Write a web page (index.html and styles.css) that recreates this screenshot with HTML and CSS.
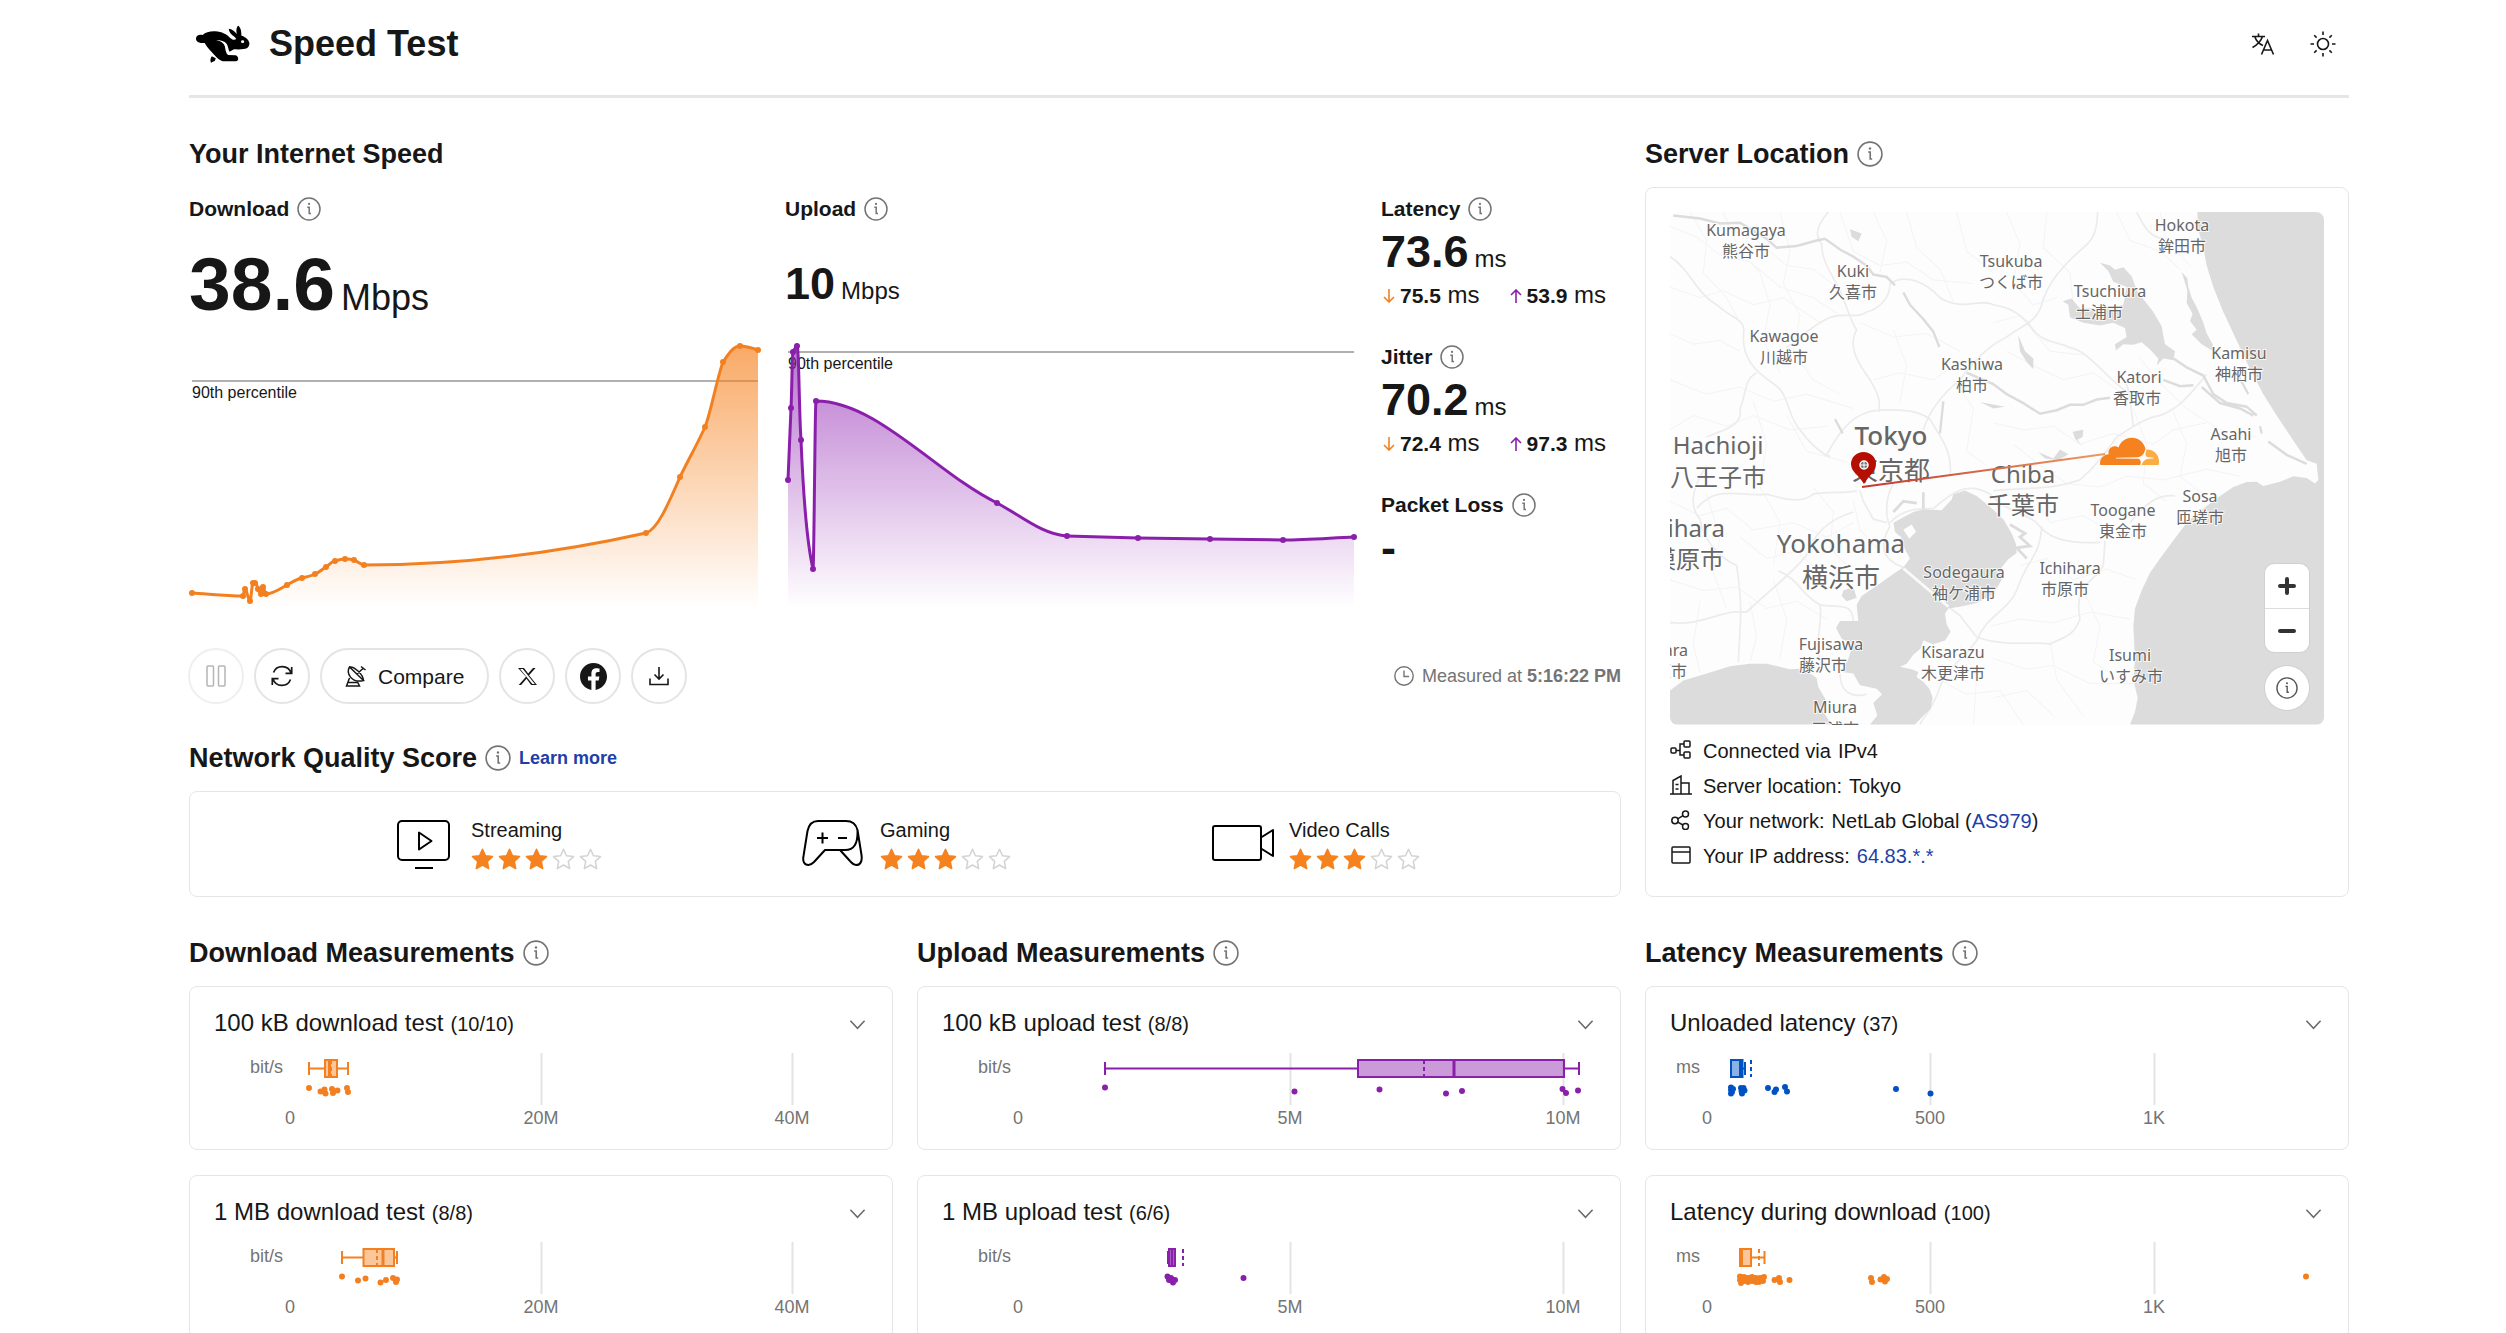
FILE: index.html
```html
<!DOCTYPE html>
<html lang="en">
<head>
<meta charset="utf-8">
<meta name="viewport" content="width=device-width, initial-scale=1">
<title>Speed Test</title>
<link rel="stylesheet" href="styles.css">
</head>
<body>
<svg class="defs" aria-hidden="true">
  <symbol id="i-info" viewBox="0 0 24 24"><g fill="none" stroke="currentColor" stroke-width="1.5"><circle cx="12" cy="12" r="11"/><path d="M10.3 10.2H12.2V16.6H14"/></g><circle cx="12" cy="6.9" r="1.1" fill="currentColor"/></symbol>
  <symbol id="i-star" viewBox="0 0 23 22"><path d="M11.5 1.2l3 6.6 7 .8-5.2 4.8 1.4 7.2-6.2-3.6-6.2 3.6 1.4-7.2L1.500 8.600l7-.8z" stroke-width="1.500" stroke-linejoin="round"/></symbol>
  <symbol id="i-chevron" viewBox="0 0 18 12"><path d="M1.500 1.500L9 9.500 16.500 1.500" fill="none" stroke="currentColor" stroke-width="1.600"/></symbol>
  <symbol id="i-down" viewBox="0 0 12 14"><path d="M6 0V13M1 8L6 13 11 8" fill="none" stroke="currentColor" stroke-width="1.600"/></symbol>
  <symbol id="i-up" viewBox="0 0 12 14"><path d="M6 14V1M1 6L6 1 11 6" fill="none" stroke="currentColor" stroke-width="1.600"/></symbol>
</svg>

<header class="site-header">
  <div class="brand">
    <svg class="logo" viewBox="0 0 60 42" aria-hidden="true"><g transform="scale(.3954 .3333) translate(-56 -68)">
      <path d="M66 115C66 106 74 101 83 104C90 96 102 92 115 93C132 94 144 103 152 112C157 118 163 120 168 116L164 110C154 103 149 92 149 85C157 86 164 93 170 102C167 92 168 80 173 76C180 82 181 95 181 106C190 108 199 117 201 127C202 138 196 145 187 146C177 148 168 147 162 147L151 154C147 146 148 139 144 131C138 122 129 119 117 119C128 122 137 128 139 138C141 148 141 158 147 164L165 165C174 166 176 183 167 183H134C128 181 120 174 112 163C104 153 94 141 88 128C78 129 66 126 66 115Z"/><path d="M106 168C103 174 101 180 104 187L114 181L116 174Z"/><circle cx="184" cy="124" r="4" fill="#fff"/></g></svg>
    <h1>Speed Test</h1>
  </div>
  <nav class="header-tools" aria-label="Preferences">
    <button class="icon-btn" aria-label="Language"><svg width="24" height="24" viewBox="0 0 24 24" fill="none" stroke="currentColor" stroke-width="1.600"><path d="M1 4.500H14M7.500 1.500V4.500M11.500 4.500C10 9 6 13 1.500 15.500M3.800 4.500C5 8.500 8.500 12 12 13.500M10.500 22.500L16.500 8.500L22.500 22.500M12.500 18H20.500"/></svg></button>
    <button class="icon-btn" aria-label="Theme"><svg width="26" height="26" viewBox="0 0 26 26" fill="none" stroke="currentColor" stroke-width="1.600"><circle cx="13" cy="13" r="5.500"/><path d="M13 .5V4M13 22V25.500M.5 13H4M22 13H25.500M4.200 4.200L6.600 6.600M19.400 19.400L21.800 21.800M4.200 21.800L6.600 19.400M19.400 6.600L21.800 4.200"/></svg></button>
  </nav>
</header>

<main class="layout">
  <div class="overview">
    <section class="speed">
      <h2>Your Internet Speed</h2>
      <div class="speed-grid">
        <div>
          <h3>Download <button class="info" aria-label="About download"><svg><use href="#i-info"/></svg></button></h3>
          <div class="value"><p class="value-xl"><strong>38.6</strong> <span>Mbps</span></p></div>
          <svg class="chart" viewBox="0 0 572 276" role="img" aria-label="Download speed over time">
            <defs><linearGradient id="g-down" x1="0" y1="14" x2="0" y2="276" gradientUnits="userSpaceOnUse"><stop offset="0" stop-color="#f6821f" stop-opacity=".68"/><stop offset="1" stop-color="#f6821f" stop-opacity="0"/></linearGradient></defs>
            <path class="pct" d="M3 49H569"/><text x="3" y="66">90th percentile</text>
            <path fill="url(#g-down)" d="M3 261C20 262 37 264 54 264C55 262 55 257 56 257C58 257 59 269 61 269C62 269 63 251 64 251H66C68 251 68 255 69 257C70 259 71 262 72 262C73 262 73 255 74 255C75 255 76 262 77 262C84 262 91 257 98 253C103 250 108 247 113 246C117 245 122 244 126 242C130 241 133 237 137 235C140 233 143 229 146 229C149 228 153 227 156 227S162 227 165 228S172 233 175 233C269 233 363 222 457 201C468 198 479 173 491 145C499 128 507 115 516 95C522 80 528 46 534 30C540 21 545 14 551 14C557 14 563 16 569 18V276H3Z"/>
            <path class="line orange" d="M3 261C20 262 37 264 54 264C55 262 55 257 56 257C58 257 59 269 61 269C62 269 63 251 64 251H66C68 251 68 255 69 257C70 259 71 262 72 262C73 262 73 255 74 255C75 255 76 262 77 262C84 262 91 257 98 253C103 250 108 247 113 246C117 245 122 244 126 242C130 241 133 237 137 235C140 233 143 229 146 229C149 228 153 227 156 227S162 227 165 228S172 233 175 233C269 233 363 222 457 201C468 198 479 173 491 145C499 128 507 115 516 95C522 80 528 46 534 30C540 21 545 14 551 14C557 14 563 16 569 18"/>
            <path class="dots orange" d="M3 261h0M54 264h0M56 257h0M61 269h0M64 251h0M66 251h0M69 257h0M72 262h0M74 255h0M77 262h0M98 253h0M113 246h0M126 242h0M137 235h0M146 229h0M156 227h0M165 228h0M175 233h0M457 201h0M491 145h0M516 95h0M534 30h0M551 14h0M569 18h0"/>
          </svg>
        </div>
        <div>
          <h3>Upload <button class="info" aria-label="About upload"><svg><use href="#i-info"/></svg></button></h3>
          <div class="value"><p class="value-lg"><strong>10</strong> <span>Mbps</span></p></div>
          <svg class="chart" viewBox="0 0 572 276" role="img" aria-label="Upload speed over time">
            <defs><linearGradient id="g-up" x1="0" y1="14" x2="0" y2="276" gradientUnits="userSpaceOnUse"><stop offset="0" stop-color="#8e1fb0" stop-opacity=".62"/><stop offset="1" stop-color="#8e1fb0" stop-opacity="0"/></linearGradient></defs>
            <path class="pct" d="M3 20H569"/><text x="3" y="37">90th percentile</text>
            <path fill="url(#g-up)" d="M3 148C4 124 5 100 6 76C7 56 7 22 8 20C9 18 11 14 12 14C14 14 14 80 16 108C19 180 24 220 28 237C29 237 30 69 31 69C91 69 151 141 212 171C235 183 258 203 282 204L353 206L425 207L498 208C522 208 545 206 569 205V276H3Z"/>
            <path class="line purple" d="M3 148C4 124 5 100 6 76C7 56 7 22 8 20C9 18 11 14 12 14C14 14 14 80 16 108C19 180 24 220 28 237C29 237 30 69 31 69C91 69 151 141 212 171C235 183 258 203 282 204L353 206L425 207L498 208C522 208 545 206 569 205"/>
            <path class="dots purple" d="M3 148h0M6 76h0M8 20h0M12 14h0M16 108h0M28 237h0M31 69h0M212 171h0M282 204h0M353 206h0M425 207h0M498 208h0M569 205h0"/>
          </svg>
        </div>
        <div class="metrics">
          <div>
            <h3>Latency <button class="info" aria-label="About latency"><svg><use href="#i-info"/></svg></button></h3>
            <p class="value-lg metric"><strong>73.6</strong> <span>ms</span></p>
            <p class="split"><span><svg class="orange"><use href="#i-down"/></svg><strong>75.5</strong> ms</span><span><svg class="purple"><use href="#i-up"/></svg><strong>53.9</strong> ms</span></p>
          </div>
          <div>
            <h3>Jitter <button class="info" aria-label="About jitter"><svg><use href="#i-info"/></svg></button></h3>
            <p class="value-lg metric"><strong>70.2</strong> <span>ms</span></p>
            <p class="split"><span><svg class="orange"><use href="#i-down"/></svg><strong>72.4</strong> ms</span><span><svg class="purple"><use href="#i-up"/></svg><strong>97.3</strong> ms</span></p>
          </div>
          <div>
            <h3>Packet Loss <button class="info" aria-label="About packet loss"><svg><use href="#i-info"/></svg></button></h3>
            <p class="value-lg metric"><strong>-</strong></p>
          </div>
        </div>
      </div>
      <div class="actions">
        <button class="pill" disabled aria-label="Pause"><svg width="20" height="22" viewBox="0 0 20 22" fill="none" stroke="currentColor" stroke-width="1.500"><rect x="1" y="1" width="6.500" height="20" rx="1"/><rect x="12.500" y="1" width="6.500" height="20" rx="1"/></svg></button>
        <button class="pill" aria-label="Retest"><svg width="22" height="22" viewBox="0 0 22 22" fill="none" stroke="currentColor" stroke-width="1.700"><path d="M2.500 7.500A9.300 9.300 0 0 1 20 8M20.700 2V8.300H14.500M19.500 14.500A9.300 9.300 0 0 1 2 14M1.300 20V13.700H7.500"/></svg></button>
        <button class="pill pill-wide"><svg width="22" height="22" viewBox="0 0 22 22" fill="none" stroke="currentColor" stroke-width="1.500"><path d="M4.500 2C1 8 6 18.500 18.500 15.500ZM4.500 2C9 1 18 9 18.500 15.500M12 9L18.500 3M16 1.500L20.500 5M4.500 13L1.500 21H14.500L12 16M3.500 17.500H12.500"/></svg>Compare</button>
        <button class="pill" aria-label="Share on X"><svg width="19" height="19" viewBox="0 0 24 24"><path d="M18.901 1.153h3.300l-8.200 9.400L24 22.846h-7.406l-5.800-7.884-6.838 7.884H.874l9.200-10.530L0 1.154h7.594l5.243 7.132ZM18.110 21.444h3.200L6.086 2.540H2.700Z"/></svg></button>
        <button class="pill" aria-label="Share on Facebook"><svg width="27" height="27" viewBox="0 0 24 24"><path d="M24 12.073c0-6.627-5.373-12-12-12s-12 5.373-12 12c0 5.990 4.388 10.954 10.125 11.854v-8.385H7.078v-3.470h3.047V9.430c0-3.007 1.792-4.669 4.533-4.669 1.312 0 2.686.235 2.686.235v2.953H15.830c-1.491 0-1.956.925-1.956 1.874v2.250h3.328l-.532 3.470h-2.796v8.385C19.612 23.027 24 18.062 24 12.073z"/></svg></button>
        <button class="pill" aria-label="Download results"><svg width="20" height="20" viewBox="0 0 20 20" fill="none" stroke="currentColor" stroke-width="1.600"><path d="M10 1V12.500M5.500 8.500L10 13 14.500 8.500M1 12.500V18.500H19V12.500"/></svg></button>
        <p class="measured"><svg width="20" height="20" viewBox="0 0 20 20" fill="none" stroke="currentColor" stroke-width="1.400"><circle cx="10" cy="10" r="9.200"/><path d="M10 4.500V10.500H15"/></svg><span>Measured at <strong>5:16:22 PM</strong></span></p>
      </div>
    </section>

    <section class="quality">
      <h2>Network Quality Score <button class="info" aria-label="About the score"><svg><use href="#i-info"/></svg></button><a class="learn" href="#">Learn more</a></h2>
      <div class="card scores">
        <div class="score">
          <svg class="score-icon" viewBox="0 0 64 56" aria-hidden="true"><rect x="5" y="5" width="51" height="39" rx="4"/><path d="M26 16.500V33.500L38.500 25Z"/><path d="M22 52H40"/></svg>
          <div><p>Streaming</p><div class="stars" role="img" aria-label="3 of 5"><svg class="on"><use href="#i-star"/></svg><svg class="on"><use href="#i-star"/></svg><svg class="on"><use href="#i-star"/></svg><svg><use href="#i-star"/></svg><svg><use href="#i-star"/></svg></div></div>
        </div>
        <div class="score">
          <svg class="score-icon" viewBox="0 0 64 56" aria-hidden="true"><path d="M16 5H44C51 5 54 8 55.500 14L59.500 39C60.500 46 58 49 54 49C51 49 50 47 48 45L38 34H23L12 46C10 48 9 49 6.500 49C2 49 .5 45 1.500 40L5.500 15C7 8 10 5 16 5ZM38 34H43C52 34 56 28 55.500 14M20.500 16.500V27.500M15 22H26M36 22H45"/></svg>
          <div><p>Gaming</p><div class="stars" role="img" aria-label="3 of 5"><svg class="on"><use href="#i-star"/></svg><svg class="on"><use href="#i-star"/></svg><svg class="on"><use href="#i-star"/></svg><svg><use href="#i-star"/></svg><svg><use href="#i-star"/></svg></div></div>
        </div>
        <div class="score">
          <svg class="score-icon" viewBox="0 0 64 56" aria-hidden="true"><rect x="2" y="10" width="48" height="34" rx="2"/><path d="M50 21.500L62 14V40L50 32.500"/></svg>
          <div><p>Video Calls</p><div class="stars" role="img" aria-label="3 of 5"><svg class="on"><use href="#i-star"/></svg><svg class="on"><use href="#i-star"/></svg><svg class="on"><use href="#i-star"/></svg><svg><use href="#i-star"/></svg><svg><use href="#i-star"/></svg></div></div>
        </div>
      </div>
    </section>
  </div>

  <section class="server">
    <h2>Server Location <button class="info" aria-label="About server location"><svg><use href="#i-info"/></svg></button></h2>
    <div class="card server-card">
      <div class="map">
        <svg class="map-canvas" viewBox="0 0 654 513" role="img" aria-label="Map of the Tokyo area">
          <rect width="654" height="513" fill="#fdfdfd"/>
          <g transform="translate(-30 -32.140) scale(.33333 .35714)">
            <g class="minor">
              <path d="M90 130L170 160 240 210 330 230 420 300 520 330 600 380M150 90L200 170 190 260 260 330 300 400M90 300L180 330 250 310 340 350 430 330 540 400M250 90L300 200 360 260 390 350 370 450 420 540M420 90L450 200 430 290 480 380 460 480 520 560 600 600M90 430L160 460 240 450 300 480M350 170L440 240 520 250 590 300M600 90L640 200 720 240 800 230 880 280 1000 290M700 90L740 170 720 260M800 90L830 190 900 250 940 340M950 90L980 200 1060 260M660 400L760 440 860 430 960 480M700 560L780 540 880 560 940 520M90 560L200 600 300 580 400 620 500 600 640 640M90 700L160 660 260 690 340 660 450 700 560 690M340 620L380 740 360 860 420 960 400 1080M440 660L500 760 620 790M90 900L180 940 260 920 340 980 460 960 560 1000 640 960M200 880L240 1000 220 1100 260 1200M300 1000L380 1060 470 1040 540 1100M90 1120L190 1150 290 1140 380 1200 470 1180 560 1230M330 1180L350 1280 330 1350M400 1120L440 1230 420 1340M180 1180L160 1300 180 1380M520 860L580 930 570 1030 620 1080M640 900L660 980 720 1040M760 420L800 520 780 620M940 560L1000 640 980 760 1040 800"/>
              <path d="M1100 90L1140 180 1120 290 1180 350 1250 330M1220 90L1210 190 1290 260 1300 350M1060 400L1140 380 1230 480 1330 490M1430 90L1470 170 1560 200 1620 250M1560 90L1580 170 1650 240M1100 480L1180 520 1270 560 1360 540 1450 600M1060 680L1150 700 1240 690 1320 740 1420 710 1540 740 1600 700 1700 680M1480 640L1520 740 1510 850 1580 900M1600 650L1640 740 1620 830 1690 880M1120 740L1200 800 1280 850 1380 860 1460 830 1570 840 1700 810 1800 830M1180 880L1230 960 1330 940 1420 990 1530 1000M1140 1080L1220 1060 1300 1120 1400 1090 1490 1120M1050 1250L1140 1230 1240 1240 1350 1210 1470 1230M1320 1130L1380 1250 1360 1350 1440 1400M1060 1340L1160 1370 1240 1360 1350 1410 1480 1410M1060 1450L1160 1430 1240 1500M1230 1290L1250 1400 1330 1500M900 1400L980 1440 1080 1430 1150 1525M960 1300L1010 1390 1000 1525M1500 500L1560 570 1640 640 1740 700 1850 720"/>
            </g>
            <path class="road" d="M565 90C520 140 530 160 545 180C545 230 580 270 600 310C630 380 640 410 650 420C620 470 660 520 690 560C715 600 720 610 718 650M90 215C150 250 170 320 230 350C280 390 310 390 312 420C300 500 350 540 400 570C450 600 440 660 480 700C510 740 550 770 570 775M350 540C310 560 320 600 300 640C310 690 250 700 200 720M440 470C480 440 530 400 570 385C620 370 650 390 680 370C720 360 750 330 750 290C800 260 860 290 900 330C970 370 1020 330 1060 350C1130 360 1150 390 1165 400C1200 460 1250 450 1290 470C1350 480 1400 560 1470 600M560 770C600 700 640 650 718 645C800 640 840 650 870 670C900 720 940 760 930 830M850 700C870 640 920 590 960 560C1030 470 1080 450 1100 440C1140 410 1190 400 1205 350C1220 290 1280 230 1330 190C1370 160 1370 130 1373 90M170 920C230 850 300 890 380 880C420 890 480 910 520 880C560 870 620 880 650 870M200 800C150 870 150 920 180 950C190 1010 240 1060 290 1080C300 1140 305 1200 300 1260L295 1350M90 1240C190 1250 250 1200 320 1210C400 1140 470 1090 500 1050C520 990 570 950 640 930M415 1095C480 1120 480 1160 540 1190C550 1250 520 1300 540 1340M660 870L670 900 700 950 740 960M760 850C730 900 740 950 750 970C720 1020 720 1060 790 1085M750 960C790 920 840 920 880 920C930 880 980 840 1050 880C1100 930 1150 930 1190 960C1220 1000 1270 1020 1380 1015M1205 970C1200 1060 1160 1060 1130 1150C1100 1210 1040 1220 1010 1290C960 1350 920 1370 900 1420C870 1500 850 1500 840 1525M790 1090C860 1140 900 1180 960 1220L1010 1280C1100 1310 1180 1290 1230 1300C1270 1280 1300 1280 1320 1230C1300 1130 1360 1130 1390 1080L1395 1010M1060 870C1170 860 1230 870 1320 840C1370 800 1400 760 1430 720C1480 690 1530 660 1560 660C1620 640 1650 600 1700 545M1480 690C1470 620 1470 580 1450 560M1470 960C1520 900 1560 880 1605 885M1490 90C1520 150 1540 160 1570 165M540 1190C600 1200 640 1180 640 1240M600 1380C600 1440 640 1450 680 1440"/>
            <path class="water" d="M760 960L790 945 820 930 850 922 905 925 935 895 940 880 975 870 1010 885 1050 915 1090 950 1115 990 1128 1020 1130 1045 1105 1062 1085 1085 1085 1120 1060 1160 1010 1185 960 1195 925 1200 915 1215 920 1245 932 1265 915 1290 880 1300 850 1290 842 1312 820 1330 800 1355 780 1363 815 1370 835 1378 830 1392 850 1405 868 1425 878 1450 872 1480 840 1510 825 1525 690 1525 712 1500 700 1465 726 1440 710 1425 660 1415 640 1382 605 1378 625 1340 640 1300 605 1285 588 1255 600 1235 655 1235 650 1190 665 1165 720 1130 750 1110 790 1085 810 1060 795 1035 785 1005 765 985ZM610 1150L640 1140 650 1170 620 1180 605 1165ZM90 1430L130 1402 200 1382 270 1362 330 1355 380 1355 450 1370 490 1368 530 1395 535 1420 560 1460 550 1490 575 1525 90 1525ZM1672 90L1675 140 1690 190 1700 240 1720 300 1750 370 1790 450 1830 530 1870 600 1910 660 1960 730 2000 785 2030 795 2035 840 2025 850 2000 835 1960 830 1920 845 1870 857 1850 845 1820 846 1780 860 1740 885 1690 920 1640 960 1600 1010 1560 1060 1530 1100 1505 1150 1485 1200 1480 1250 1485 1340 1480 1400 1493 1450 1485 1490 1470 1525H2052V90Z"/>
            <g transform="translate(1050)"><path class="water" d="M330 232L360 240 375 252 400 245 425 270 440 310 465 340 490 370 515 410 525 460 555 480 550 505 520 500 500 520 505 500 480 475 455 455 430 462 400 460 378 478 375 460 410 440 405 415 370 400 330 408 280 400 240 385 235 350 218 340 245 332 270 360 350 360 400 350 410 300 370 285 355 255ZM575 258L592 275 595 300 605 330 622 360 640 400 650 430 668 460 670 480 635 460 605 432 620 420 600 395 608 375 590 345 592 310ZM85 435L105 480 130 500 130 530 110 510 90 480ZM248 705L280 700 278 720 262 728 275 745 255 725ZM145 762L190 780 210 755 235 768 205 785 165 780Z"/></g>
            <path class="water" d="M630 138L665 150 655 172 635 160ZM1020 622L1095 635 1060 640Z"/>
            <path class="river" d="M100 100L180 108 240 122 300 120 380 165 410 190 470 185 530 170 555 165 600 195 640 215 680 240 700 265 740 272 765 295M790 315L810 350 850 390 880 425 898 468M980 540L1060 572 1100 600 1150 625 1200 655 1250 645 1290 630 1330 630 1370 615 1410 610M1570 560L1620 578 1660 575M1600 500L1640 525 1690 548 1720 600 1760 625 1820 635 1850 660M1685 580L1740 625 1800 640 1840 660M1790 540L1825 600M1885 733L1940 770 2000 795M1860 690L1865 710M910 620L900 710M585 670L608 710"/>
            <path class="dock" d="M1110 965L1155 990 1140 1000 1170 1025 1130 1030 1160 1060M760 930L790 900 830 905M850 875L850 920"/>
            <path fill="#fdfdfd" d="M790 980L815 965 828 985 808 1005ZM765 990L785 1000 770 1008Z"/>
            <path d="M790 1088L925 1195" stroke="#fafafa" stroke-width="8"/>
          </g>
          <g class="place">
            <text x="76" y="24">Kumagaya</text><text x="76" y="45">熊谷市</text>
            <text x="183" y="65">Kuki</text><text x="183" y="86">久喜市</text>
            <text x="114" y="130">Kawagoe</text><text x="114" y="151">川越市</text>
            <text x="341" y="55">Tsukuba</text><text x="341" y="76">つくば市</text>
            <text x="440" y="85">Tsuchiura</text><text x="429" y="106">土浦市</text>
            <text x="512" y="19">Hokota</text><text x="512" y="40">鉾田市</text>
            <text x="569" y="147">Kamisu</text><text x="569" y="168">神栖市</text>
            <text x="469" y="171">Katori</text><text x="467" y="192">香取市</text>
            <text x="302" y="158">Kashiwa</text><text x="302" y="179">柏市</text>
            <text x="561" y="228">Asahi</text><text x="561" y="249">旭市</text>
            <text x="530" y="290">Sosa</text><text x="530" y="311">匝瑳市</text>
            <text x="453" y="304">Toogane</text><text x="453" y="325">東金市</text>
            <text x="400" y="362">Ichihara</text><text x="395" y="383">市原市</text>
            <text x="460" y="449">Isumi</text><text x="461" y="470">いすみ市</text>
            <text x="294" y="366">Sodegaura</text><text x="294" y="387">袖ケ浦市</text>
            <text x="283" y="446">Kisarazu</text><text x="283" y="467">木更津市</text>
            <text x="161" y="438">Fujisawa</text><text x="153" y="459">藤沢市</text>
            <text x="165" y="501">Miura</text><text x="165" y="523">三浦市</text>
            <text class="end" x="18" y="444">Odawara</text><text class="end" x="17" y="465">小田原市</text>
          </g>
          <g class="place city">
            <text x="48" y="242">Hachioji</text><text x="48" y="274">八王子市</text>
            <text class="end" x="55" y="325">Sagamihara</text><text class="end" x="54" y="356">相模原市</text>
            <text x="353" y="271">Chiba</text><text x="353" y="302">千葉市</text>
          </g>
          <g class="place metro">
            <text class="capital" x="221" y="233">Tokyo</text><text x="221" y="268">東京都</text>
            <text x="171" y="341">Yokohama</text><text x="171" y="375">横浜市</text>
          </g>
          <defs><linearGradient id="g-route" x1="0" x2="1"><stop offset="0" stop-color="#c0392b"/><stop offset="1" stop-color="#ee9a62"/></linearGradient></defs>
          <path d="M192 275L435 242" stroke="url(#g-route)" stroke-width="2"/>
          <path d="M194 272C189 263 181 260 181 252A12.500 12 0 0 1 206 252C206 260 199 263 194 272Z" fill="#b50f04"/>
          <circle cx="194" cy="253" r="4" fill="#777" stroke="#fff" stroke-width="1.500"/><path d="M194 249V257M190 253H198" stroke="#fff"/>
          <g transform="translate(430 209.500) scale(2.460 2.490)"><path fill="#f6821f" d="M16.509 16.845c.147-.507.090-.971-.156-1.315-.224-.317-.604-.499-1.061-.521l-8.659-.112a.156.156 0 0 1-.133-.071c-.028-.042-.035-.099-.021-.156.028-.084.112-.148.203-.156l8.736-.112c1.035-.049 2.160-.887 2.554-1.914l.499-1.301c.021-.056.029-.113.015-.168-.562-2.546-2.835-4.445-5.550-4.445-2.504 0-4.628 1.618-5.388 3.861-.493-.366-1.119-.562-1.794-.499-1.203.119-2.167 1.083-2.286 2.286-.028.310-.007.613.063.894C1.568 13.171 0 14.775 0 16.752c0 .175.014.351.035.527.014.083.084.148.169.148h15.981c.091 0 .176-.065.203-.155z"/><path fill="#fbad41" d="M19.266 11.281c-.077 0-.161 0-.238.011-.057 0-.105.042-.127.098l-.338 1.174c-.147.507-.092.971.154 1.316.226.316.606.498 1.063.520l1.844.113c.056 0 .105.026.133.070.028.043.035.107.021.156-.028.084-.113.149-.204.155l-1.921.112c-1.041.049-2.158.887-2.553 1.914l-.141.358c-.028.071.021.142.099.142h6.598c.077 0 .147-.049.169-.126.112-.408.176-.837.176-1.280 0-2.603-2.125-4.727-4.734-4.727"/></g>
        </svg>
        <div class="map-controls">
          <div class="zoom">
            <button aria-label="Zoom in"><svg width="18" height="18" viewBox="0 0 18 18"><path d="M9 2V16M2 9H16"/></svg></button>
            <button aria-label="Zoom out"><svg width="18" height="18" viewBox="0 0 18 18"><path d="M2 9H16"/></svg></button>
          </div>
          <button class="map-info" aria-label="Map attribution"><svg width="22" height="22"><use href="#i-info"/></svg></button>
        </div>
      </div>
      <ul class="facts">
        <li><svg viewBox="0 0 22 20"><rect x="1" y="8" width="5" height="5" rx="1"/><rect x="14" y="1" width="6" height="6" rx="1"/><rect x="14" y="12" width="6" height="6" rx="1"/><path d="M6 10.500H10M14 4H10V15H14"/></svg><span>Connected via</span><span>IPv4</span></li>
        <li><svg viewBox="0 0 22 20"><path d="M0 19H22M3 19V5.500L11 1V19M11 8H19V19M5.500 9.500H8.500M5.500 14H8.500" /></svg><span>Server location:</span><span>Tokyo</span></li>
        <li><svg viewBox="0 0 22 20"><circle cx="5" cy="10.500" r="3.200"/><circle cx="15.500" cy="4" r="3"/><circle cx="15.500" cy="16.500" r="3"/><path d="M7.700 8.800L13 5.600M7.700 12.200L13 15"/></svg><span>Your network:</span><span>NetLab Global (<a href="#">AS979</a>)</span></li>
        <li><svg viewBox="0 0 22 20"><rect x="2" y="2" width="18" height="16" rx="1"/><path d="M2 7H20"/></svg><span>Your IP address:</span><a href="#">64.83.*.*</a></li>
      </ul>
    </div>
  </section>

  <section class="measure">
    <h2>Download Measurements <button class="info" aria-label="About download measurements"><svg><use href="#i-info"/></svg></button></h2>
    <article class="card test">
      <h4>100 kB download test <small>(10/10)</small><button class="toggle" aria-label="Expand"><svg><use href="#i-chevron"/></svg></button></h4>
      <svg class="box orange" viewBox="0 0 654 84"><path class="grid" d="M327.500 6V58M578.500 6V58"/><text x="36" y="26">bit/s</text><g class="ticks"><text x="76" y="77">0</text><text x="327" y="77">20M</text><text x="578" y="77">40M</text></g>
        <path class="wh" d="M95 15V28M134 15V28M95 21.500H111M123 21.500H134"/><rect x="111" y="13" width="12" height="17"/><path class="med" d="M115.500 13V30"/><path class="mean" d="M117 13V30"/>
        <path class="dots" d="M95 41h0M106.500 44.500h0M110.500 42.500h0M111.500 46.500h0M118 42h0M119 46h0M123.500 43.500h0M133 41h0M134 45h0"/></svg>
    </article>
    <article class="card test">
      <h4>1 MB download test <small>(8/8)</small><button class="toggle" aria-label="Expand"><svg><use href="#i-chevron"/></svg></button></h4>
      <svg class="box orange" viewBox="0 0 654 84"><path class="grid" d="M327.500 6V58M578.500 6V58"/><text x="36" y="26">bit/s</text><g class="ticks"><text x="76" y="77">0</text><text x="327" y="77">20M</text><text x="578" y="77">40M</text></g>
        <path class="wh" d="M128 15V28M183 15V28M128 21.500H150M180 21.500H183"/><rect x="149.500" y="13" width="30.500" height="17"/><path class="med" d="M169 13V30"/><path class="mean" d="M163 13V30"/>
        <path class="dots" d="M128 40.500h0M144 44.500h0M151.500 42.500h0M166.500 46.500h0M172 44h0M179 42h0M182 46h0M183 43.500h0"/></svg>
    </article>
  </section>

  <section class="measure">
    <h2>Upload Measurements <button class="info" aria-label="About upload measurements"><svg><use href="#i-info"/></svg></button></h2>
    <article class="card test">
      <h4>100 kB upload test <small>(8/8)</small><button class="toggle" aria-label="Expand"><svg><use href="#i-chevron"/></svg></button></h4>
      <svg class="box purple" viewBox="0 0 654 84"><path class="grid" d="M348.500 6V58M621.500 6V58"/><text x="36" y="26">bit/s</text><g class="ticks"><text x="76" y="77">0</text><text x="348" y="77">5M</text><text x="621" y="77">10M</text></g>
        <path class="wh" d="M163 15V28M637 15V28M163 21.500H416M622 21.500H637"/><rect x="416" y="13" width="206" height="17"/><path class="med" d="M512 13V30"/><path class="mean" d="M482 13V30"/>
        <path class="dots" d="M163 40.500h0M352.500 44.500h0M437.500 42.500h0M504 46.500h0M520 44h0M620.500 42h0M624 46h0M636 43.500h0"/></svg>
    </article>
    <article class="card test">
      <h4>1 MB upload test <small>(6/6)</small><button class="toggle" aria-label="Expand"><svg><use href="#i-chevron"/></svg></button></h4>
      <svg class="box purple" viewBox="0 0 654 84"><path class="grid" d="M348.500 6V58M621.500 6V58"/><text x="36" y="26">bit/s</text><g class="ticks"><text x="76" y="77">0</text><text x="348" y="77">5M</text><text x="621" y="77">10M</text></g>
        <path class="wh" d="M226 15V28M226 21.500H228"/><rect x="227" y="13" width="6" height="17"/><path class="med" d="M230 13V30"/><path class="mean" d="M241 13V30"/>
        <path class="dots" d="M225.500 40.500h0M227 44h0M229 42h0M231 46.500h0M233 44h0M301.500 42h0"/></svg>
    </article>
  </section>

  <section class="measure">
    <h2>Latency Measurements <button class="info" aria-label="About latency measurements"><svg><use href="#i-info"/></svg></button></h2>
    <article class="card test">
      <h4>Unloaded latency <small>(37)</small><button class="toggle" aria-label="Expand"><svg><use href="#i-chevron"/></svg></button></h4>
      <svg class="box blue" viewBox="0 0 654 84"><path class="grid" d="M260.500 6V58M484.500 6V58"/><text x="6" y="26">ms</text><g class="ticks"><text x="37" y="77">0</text><text x="260" y="77">500</text><text x="484" y="77">1K</text></g>
        <path class="wh" d="M75 15V28M72 21.500H75"/><rect x="61" y="13" width="11.500" height="17"/><path class="med" d="M70.500 13V30"/><path class="mean" d="M81 13V30"/>
        <path class="dots" d="M61 40.500h0M61 43h0M61 46.500h0M63 42h0M62 45h0M71 41h0M71.500 44h0M72 46.500h0M73.500 41h0M74.500 43.500h0M98 41h0M106 42.500h0M104.500 45h0M115 40h0M117 44.500h0M226 42h0M260.500 46.500h0"/></svg>
    </article>
    <article class="card test">
      <h4>Latency during download <small>(100)</small><button class="toggle" aria-label="Expand"><svg><use href="#i-chevron"/></svg></button></h4>
      <svg class="box orange" viewBox="0 0 654 84"><path class="grid" d="M260.500 6V58M484.500 6V58"/><text x="6" y="26">ms</text><g class="ticks"><text x="37" y="77">0</text><text x="260" y="77">500</text><text x="484" y="77">1K</text></g>
        <path class="wh" d="M94.500 15V28M81 21.500H94.500"/><rect x="70" y="13" width="11" height="17"/><path class="med" d="M71.500 13V30"/><path class="mean" d="M89 13V30"/>
        <path class="dots" d="M70 40.500h0M70 44h0M71 47h0M74 41h0M74 45h0M78 42h0M78 46h0M82 41h0M82 45h0M86 42h0M86 46h0M90 42h0M89 46h0M94 41h0M93 45h0M104.500 44h0M109 42h0M110 46h0M119.500 44h0M201 42h0M202 46h0M210.500 43.500h0M214 41h0M215 45.500h0M217 43h0M636 40.500h0"/></svg>
    </article>
  </section>
</main>
</body>
</html>
```
FILE: styles.css
```css
*, *::before, *::after { box-sizing: border-box; }

:root {
  --text: #171717;
  --muted: #747474;
  --line: #e6e6e6;
  --link: #1f3fa8;
  --orange: #f38020;
  --purple: #8a1fab;
  --blue: #0051c3;
}

body {
  margin: 0;
  padding: 0 157px 40px 189px;
  background: #fff;
  color: var(--text);
  font: 20px/35px "Liberation Sans", Arial, sans-serif;
}

h1, h2, h3, h4, p, ul { margin: 0; padding: 0; }
a { color: var(--link); text-decoration: none; }
svg { display: block; flex: none; }
button { padding: 0; border: 0; background: none; color: inherit; font: inherit; cursor: pointer; }

.defs { position: absolute; width: 0; height: 0; }
.orange { color: var(--orange); }
.purple { color: var(--purple); }
.blue { color: var(--blue); }

/* Header */
.site-header {
  display: flex;
  align-items: center;
  justify-content: space-between;
  height: 98px;
  padding-bottom: 8px;
  border-bottom: 3px solid var(--line);
}
.brand { display: flex; align-items: center; gap: 17px; padding-left: 3px; }
.logo { width: 60px; height: 42px; fill: #000; }
h1 { font-size: 36px; line-height: 44px; }
.header-tools { display: flex; gap: 8px; }
.icon-btn { display: grid; place-items: center; width: 52px; height: 52px; }

/* Page grid */
.layout {
  display: grid;
  grid-template-columns: repeat(3, minmax(0, 1fr));
  gap: 38px 24px;
  padding-top: 38px;
}
.overview { grid-column: span 2; display: flex; flex-direction: column; gap: 36px; }

h2 {
  display: flex;
  align-items: center;
  gap: 8px;
  margin-bottom: 15px;
  font-size: 27px;
  line-height: 36px;
}
h3 { display: flex; align-items: center; gap: 8px; font-size: 21px; line-height: 30px; }
.info { color: var(--muted); }
h2 .info svg { width: 26px; height: 26px; }
h3 .info svg { width: 24px; height: 24px; }
.learn { font-size: 18px; }

.card { border: 1px solid var(--line); border-radius: 8px; }

/* Speed */
.speed-grid {
  display: grid;
  grid-template-columns: 1fr 1fr 240px;
  gap: 24px;
  margin-top: 22px;
}
.speed h2 { margin-bottom: 0; }
.value { display: flex; align-items: center; height: 96px; margin-top: 12px; }
.value p, .metric { display: flex; align-items: baseline; gap: 6px; }
.value-xl { font-size: 75px; line-height: 96px; }
.value-xl span { font-size: 36px; line-height: 36px; }
.value-lg { font-size: 45px; line-height: 56px; }
.value-lg span { font-size: 24px; line-height: 24px; }
.chart { width: 100%; height: auto; overflow: visible; }
.chart text { font-size: 16px; fill: var(--text); }
.pct { stroke: #b0b0b0; stroke-width: 2; }
.line { fill: none; stroke: currentColor; stroke-width: 3; stroke-linejoin: round; }
.dots { fill: none; stroke: currentColor; stroke-width: 6; stroke-linecap: round; }

.metrics { display: flex; flex-direction: column; gap: 32px; }
.split { display: flex; gap: 28px; font-size: 24px; line-height: 30px; white-space: pre; }
.split span { display: flex; align-items: baseline; height: 30px; }
.split svg { width: 12px; height: 14px; margin: 0 5px 0 2px; }
.split strong { font-size: 21px; }

.actions { display: flex; align-items: center; gap: 10px; margin: 40px 0 0 -1px; }
.pill {
  display: flex;
  align-items: center;
  justify-content: center;
  gap: 11px;
  width: 56px;
  height: 56px;
  border: 2px solid #e4e4e4;
  border-radius: 28px;
  font-size: 21px;
}
.pill svg:not([fill="none"]) { fill: currentColor; }
.pill:disabled { border-color: #efefef; color: #b5b5b5; }
.pill-wide { width: auto; padding: 0 23px; }
.measured { display: flex; align-items: center; gap: 8px; margin-left: auto; color: var(--muted); font-size: 18px; }

/* Quality */
.scores { display: flex; justify-content: space-evenly; padding: 24px 0 24px 3px; }
.score { display: flex; gap: 14px; line-height: 28px; }
.score-icon { width: 64px; height: 56px; fill: none; stroke: #000; stroke-width: 2; stroke-linejoin: round; }
.stars { display: flex; gap: 4px; padding-top: 4px; }
.stars svg { width: 23px; height: 22px; fill: none; stroke: #d3d3d3; }
.stars .on { fill: #f6821f; stroke: #f6821f; }

/* Server location */
.server { display: flex; flex-direction: column; }
.server-card { flex: 1; padding: 24px 24px 20px; }
.map { position: relative; overflow: hidden; border-radius: 8px; }
.map-canvas { width: 100%; height: auto; }
.minor { fill: none; stroke: #f4f4f4; stroke-width: 3; }
.road { fill: none; stroke: #ececec; stroke-width: 5; }
.water { fill: #dcdcdc; }
.river { fill: none; stroke: #dcdcdc; stroke-width: 7; }
.dock { fill: none; stroke: #dcdcdc; stroke-width: 8; }
.place {
  font-family: "Noto Sans", "Noto Sans CJK JP", sans-serif;
  font-size: 16px;
  fill: #666;
  text-anchor: middle;
  stroke: #fff;
  stroke-opacity: .8;
  stroke-width: 2;
  paint-order: stroke;
}
.city { font-size: 24px; }
.metro { font-size: 26px; }
.capital { font-weight: 500; }
.place .end { text-anchor: end; }

.map-controls { position: absolute; right: 15px; bottom: 15px; display: grid; gap: 14px; }
.zoom, .map-info { width: 44px; background: #fff; box-shadow: 0 0 0 1px #d0d0d0; }
.zoom { border-radius: 9px; }
.zoom button { display: grid; place-items: center; width: 44px; height: 44px; }
.zoom button + button { border-top: 1px solid #ddd; }
.zoom path { stroke: #333; stroke-width: 4; stroke-linecap: round; }
.map-info { display: grid; place-items: center; height: 44px; border-radius: 50%; color: #555; }

.facts { list-style: none; margin-top: 9px; }
.facts li { display: flex; align-items: center; gap: 7px; }
.facts svg { width: 22px; height: 20px; margin: 0 4px 4px 0; fill: none; stroke: currentColor; stroke-width: 1.5px; }

/* Measurements */
.measure { display: flex; flex-direction: column; }
.test { padding: 20px 24px 18px; }
.test + .test { margin-top: 25px; }
h4 { display: flex; align-items: baseline; gap: 7px; height: 32px; font-size: 24px; font-weight: 400; line-height: 32px; margin-bottom: 8px; }
small { font-size: 20px; line-height: 24px; }
.toggle { align-self: center; margin: 4px 2px 0 auto; color: #6a6a6a; line-height: 12px; }
.toggle svg { width: 17px; height: 12px; }
.box { width: 100%; height: auto; }
.box text { font-size: 18px; fill: var(--muted); }
.ticks { text-anchor: middle; }
.grid { stroke: #e4e4e4; stroke-width: 2; }
.box rect { fill: currentColor; fill-opacity: .45; stroke: currentColor; stroke-width: 2; }
.wh { fill: none; stroke: currentColor; stroke-width: 2; }
.med { stroke: currentColor; stroke-width: 3; }
.mean { stroke: currentColor; stroke-width: 2; stroke-dasharray: 4 3; }
```
